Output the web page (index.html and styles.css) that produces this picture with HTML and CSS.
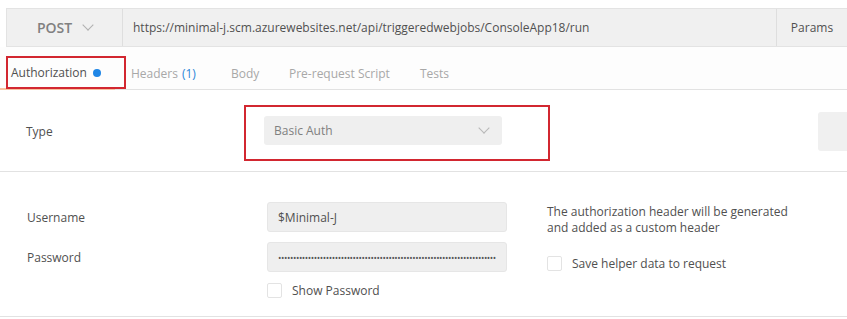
FILE: index.html
```html
<!DOCTYPE html>
<html>
<head>
    <title>Authorization</title>
    <link rel="stylesheet" href="styles.css">
</head>
<body>
    <div class="request-bar">
        <div class="method">POST <span class="chevron"></span></div>
        <div class="url">https://minimal-j.scm.azurewebsites.net/api/triggeredwebjobs/ConsoleApp18/run</div>
        <div class="params">Params</div>
    </div>

    <div class="tabs">
        <div class="tab active">Authorization <span class="dot"></span><div class="mark mark-tab"></div></div>
        <div class="tab tab-headers">Headers <span class="count">(1)</span></div>
        <div class="tab tab-body">Body</div>
        <div class="tab tab-pre">Pre-request Script</div>
        <div class="tab">Tests</div>
    </div>

    <div class="type-row">
        <div class="type-label">Type</div>
        <div class="type-select-wrap">
            <div class="select">Basic Auth <span class="chevron"></span></div>
            <div class="mark mark-type"></div>
        </div>
        <div class="side-button"></div>
    </div>

    <div class="auth-form">
        <div class="fields">
            <div class="field">
                <div class="field-label">Username</div>
                <div class="input">$Minimal-J</div>
            </div>
            <div class="field">
                <div class="field-label">Password</div>
                <div class="input"><span class="password">&bull;&bull;&bull;&bull;&bull;&bull;&bull;&bull;&bull;&bull;&bull;&bull;&bull;&bull;&bull;&bull;&bull;&bull;&bull;&bull;&bull;&bull;&bull;&bull;&bull;&bull;&bull;&bull;&bull;&bull;&bull;&bull;&bull;&bull;&bull;&bull;&bull;&bull;&bull;&bull;&bull;&bull;&bull;&bull;&bull;&bull;&bull;&bull;&bull;&bull;&bull;&bull;&bull;&bull;&bull;&bull;&bull;&bull;&bull;&bull;&bull;&bull;&bull;&bull;&bull;&bull;&bull;&bull;&bull;&bull;&bull;&bull;&bull;</span></div>
            </div>
            <div class="field">
                <div class="field-label"></div>
                <label class="check"><span class="box"></span>Show Password</label>
            </div>
        </div>
        <div class="help">
            <p>The authorization header will be generated<br>and added as a custom header</p>
            <label class="check"><span class="box"></span>Save helper data to request</label>
        </div>
    </div>
</body>
</html>
```

FILE: styles.css
```css
body {
    margin: 0;
    font-family: "Open Sans", "Liberation Sans", sans-serif;
    font-size: 12px;
    color: #505050;
    background-color: #ffffff;
    overflow: hidden;
}
.request-bar {
    display: flex;
    height: 37px;
    margin: 8px 0 0 6px;
    background-color: #f0f0f0;
    border: 1px solid #e3e3e3;
    border-right: none;
}
.method {
    width: 115px;
    display: flex;
    align-items: center;
    justify-content: center;
    gap: 12px;
    font-size: 14px;
    font-weight: 600;
    color: #808080;
    border-right: 1px solid #dedede;
}
.chevron {
    display: inline-block;
    width: 7px;
    height: 7px;
    border-right: 1px solid #b0b0b0;
    border-bottom: 1px solid #b0b0b0;
    transform: rotate(45deg);
    margin-top: -5px;
}
.url {
    flex: 1;
    display: flex;
    align-items: center;
    padding-left: 10px;
    color: #505050;
}
.params {
    width: 70px;
    display: flex;
    align-items: center;
    justify-content: center;
    border-left: 1px solid #dedede;
    color: #505050;
}
.tabs {
    display: flex;
    height: 42px;
    border-bottom: 1px solid #e2e2e2;
    background-color: #fdfdfd;
}
.tab {
    position: relative;
    display: flex;
    align-items: center;
    padding-top: 10px;
    color: #a8a8a8;
}
.tab.active {
    width: 104px;
    padding-left: 11px;
    color: #505050;
    border-bottom: 2px solid #f8c2a2;
    margin-bottom: -1px;
}
.tab-headers {
    width: 100px;
    padding-left: 16px;
}
.tab-body {
    width: 58px;
}
.tab-pre {
    width: 131px;
}
.dot {
    display: inline-block;
    width: 8px;
    height: 8px;
    margin-left: 6px;
    border-radius: 50%;
    background-color: #1f86e6;
}
.count {
    margin-left: 4px;
    color: #2a86d8;
}
.mark {
    position: absolute;
    border: 2px solid #d22730;
    box-sizing: border-box;
}
.mark-tab {
    left: 6px;
    top: 9px;
    width: 120px;
    height: 33px;
}
.type-row {
    display: flex;
    align-items: center;
    height: 81px;
    border-bottom: 1px solid #e2e2e2;
}
.type-label {
    width: 238px;
    padding-left: 26px;
    padding-top: 2px;
}
.type-select-wrap {
    position: relative;
    flex: 1;
}
.select {
    display: flex;
    align-items: center;
    justify-content: space-between;
    width: 238px;
    height: 29px;
    padding: 0 14px 0 10px;
    box-sizing: border-box;
    border-radius: 3px;
    background-color: #efefef;
    color: #808080;
}
.select .chevron {
    border-color: #b8b8b8;
}
.mark-type {
    left: -20px;
    top: -11px;
    width: 306px;
    height: 56px;
}
.side-button {
    width: 29px;
    height: 39px;
    margin-top: 2px;
    border-radius: 3px 0 0 3px;
    background-color: #f0f0f0;
}
.auth-form {
    display: flex;
    height: 145px;
    padding-top: 30px;
    box-sizing: border-box;
    border-bottom: 1px solid #e2e2e2;
}
.fields {
    display: flex;
    flex-direction: column;
    gap: 10px;
}
.field {
    display: flex;
    align-items: center;
}
.field-label {
    width: 240px;
    padding-left: 27px;
}
.input {
    width: 240px;
    height: 30px;
    padding: 0 10px;
    box-sizing: border-box;
    display: flex;
    align-items: center;
    border: 1px solid #e6e6e6;
    border-radius: 3px;
    background-color: #efefef;
    color: #505050;
    white-space: nowrap;
}
.password {
    overflow: hidden;
    font-size: 9px;
    letter-spacing: -0.4px;
    color: #555555;
}
.check {
    display: flex;
    align-items: center;
    gap: 10px;
}
.box {
    width: 15px;
    height: 15px;
    box-sizing: border-box;
    border: 1px solid #e3e3e3;
    border-radius: 2px;
    background-color: #ffffff;
}
.help {
    padding-left: 40px;
}
.help p {
    margin: 2px 0 19px;
    line-height: 16px;
}
```
